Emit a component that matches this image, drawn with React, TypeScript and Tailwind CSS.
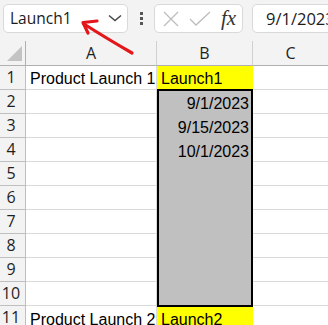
import React from "react";

const cellFont = { fontFamily: '"Liberation Sans", Arial, sans-serif' };

function RowHead({ n }: { n: number }) {
  return (
    <div className="border-r border-b border-[#bfbfbf] bg-[#f3f3f3] pr-[3px] text-center text-[16px] leading-[23px] text-[#1f1f1f]">
      {n}
    </div>
  );
}

export default function App() {
  const dates = ["9/1/2023", "9/15/2023", "10/1/2023"];
  const middle = [2, 3, 4, 5, 6, 7, 8, 9, 10];

  return (
    <div
      className="relative h-[325px] w-[328px] overflow-hidden bg-white"
      style={{ fontFamily: '"Open Sans", "Noto Sans", sans-serif' }}
    >
      {/* toolbar: name box + formula bar */}
      <div className="flex h-[41px] items-start bg-[#f3f3f3] pt-1 pl-[3px]">
        <div className="flex h-[29px] w-[125px] shrink-0 items-center justify-between rounded-[5px] border border-[#d9d9d9] bg-white pt-[1px] pr-[5px] pl-[6px] text-[15.5px] text-[#1b1b1b]">
          <span>Launch1</span>
          <svg width="14" height="8" viewBox="0 0 14 8" className="-mt-[2px]">
            <path d="M1 1.5 L7 6.5 L13 1.5" fill="none" stroke="#444" strokeWidth="1.4" />
          </svg>
        </div>
        <div className="flex h-[29px] w-[26px] shrink-0 flex-col items-center justify-center gap-[2px]">
          <span className="h-[3px] w-[3px] bg-[#555]" />
          <span className="h-[3px] w-[3px] bg-[#555]" />
          <span className="h-[3px] w-[3px] bg-[#555]" />
        </div>
        <div className="flex h-[29px] w-[89px] shrink-0 items-center rounded-[5px] border border-[#d9d9d9] bg-white">
          <svg width="16" height="16" viewBox="0 0 16 16" className="ml-[8px]">
            <path d="M1 1 L15 15 M15 1 L1 15" stroke="#bdbdbd" strokeWidth="1.3" />
          </svg>
          <svg width="22" height="16" viewBox="0 0 22 16" className="ml-[10px]">
            <path d="M1 8 L7 14 L21 1" fill="none" stroke="#bdbdbd" strokeWidth="1.3" />
          </svg>
          <span
            className="ml-[10px] text-[21px] italic leading-none text-[#333]"
            style={{ fontFamily: '"Liberation Serif", "Times New Roman", serif' }}
          >
            fx
          </span>
        </div>
        <div className="ml-[9px] flex h-[29px] w-[100px] shrink-0 items-center rounded-l-[5px] border border-[#d9d9d9] bg-white pt-[1px] pl-[13px] text-[16.5px] whitespace-nowrap text-[#1b1b1b]">
          9/1/2023
        </div>
      </div>

      {/* sheet grid */}
      <div className="grid grid-cols-[26px_131px_96px_1fr] grid-rows-[25px_repeat(11,24px)]">
        <div className="relative border-r border-b border-[#b0b0b0] bg-[#f3f3f3]">
          <svg width="26" height="25" viewBox="0 0 26 25" className="absolute top-0 left-0">
            <path d="M7 20 L22 20 L22 5 Z" fill="#c3c3c3" />
          </svg>
        </div>
        <div className="border-r border-b border-r-[#d0d0d0] border-b-[#b0b0b0] bg-[#f3f3f3] text-center text-[16px] leading-[24px] text-[#1f1f1f]">
          A
        </div>
        <div className="border-r border-b border-r-[#d0d0d0] border-b-[#b0b0b0] bg-[#f3f3f3] text-center text-[16px] leading-[24px] text-[#1f1f1f]">
          B
        </div>
        <div className="border-b border-[#b0b0b0] bg-[#f3f3f3] text-center text-[16px] leading-[24px] text-[#1f1f1f]">
          C
        </div>

        {/* row 1 */}
        <RowHead n={1} />
        <div className="border-r border-b border-[#dadada] pt-px pl-[4px] text-[16px] leading-[23px] whitespace-nowrap text-black" style={cellFont}>
          Product Launch 1
        </div>
        <div className="border-b border-[#dadada] bg-[#ffff00] pt-px pl-[4px] text-[16px] leading-[23px] text-black" style={cellFont}>
          Launch1
        </div>
        <div className="border-b border-[#dadada]" />

        {/* rows 2-10 */}
        {middle.map((n) => (
          <React.Fragment key={n}>
            <RowHead n={n} />
            <div className="border-r border-b border-[#dadada]" />
            {n === 2 && (
              <div
                className="relative z-10 col-start-3 row-span-9 -mt-px -mb-px border-2 border-black bg-[#c0c0c0] pt-px pr-[2px] text-right text-[16px] text-black"
                style={cellFont}
              >
                {dates.map((d) => (
                  <div key={d} className="h-6 leading-[23px]">
                    {d}
                  </div>
                ))}
              </div>
            )}
            <div className="col-start-4 border-b border-[#dadada]" />
          </React.Fragment>
        ))}

        {/* row 11 */}
        <RowHead n={11} />
        <div className="border-r border-b border-[#dadada] pt-[2px] pl-[4px] text-[16px] leading-[23px] whitespace-nowrap text-black" style={cellFont}>
          Product Launch 2
        </div>
        <div className="border-b border-[#dadada] bg-[#ffff00] pt-[2px] pl-[4px] text-[16px] leading-[23px] text-black" style={cellFont}>
          Launch2
        </div>
        <div className="border-b border-[#dadada]" />
      </div>

      {/* red annotation arrow */}
      <svg width="328" height="80" viewBox="0 0 328 80" className="pointer-events-none absolute top-0 left-0">
        <path d="M84 24 Q 106 38 132 53" fill="none" stroke="#e3161b" strokeWidth="3.2" strokeLinecap="round" />
        <path d="M97 21 L83 22.5 L88 33" fill="none" stroke="#e3161b" strokeWidth="3.2" strokeLinecap="round" strokeLinejoin="round" />
      </svg>
    </div>
  );
}
